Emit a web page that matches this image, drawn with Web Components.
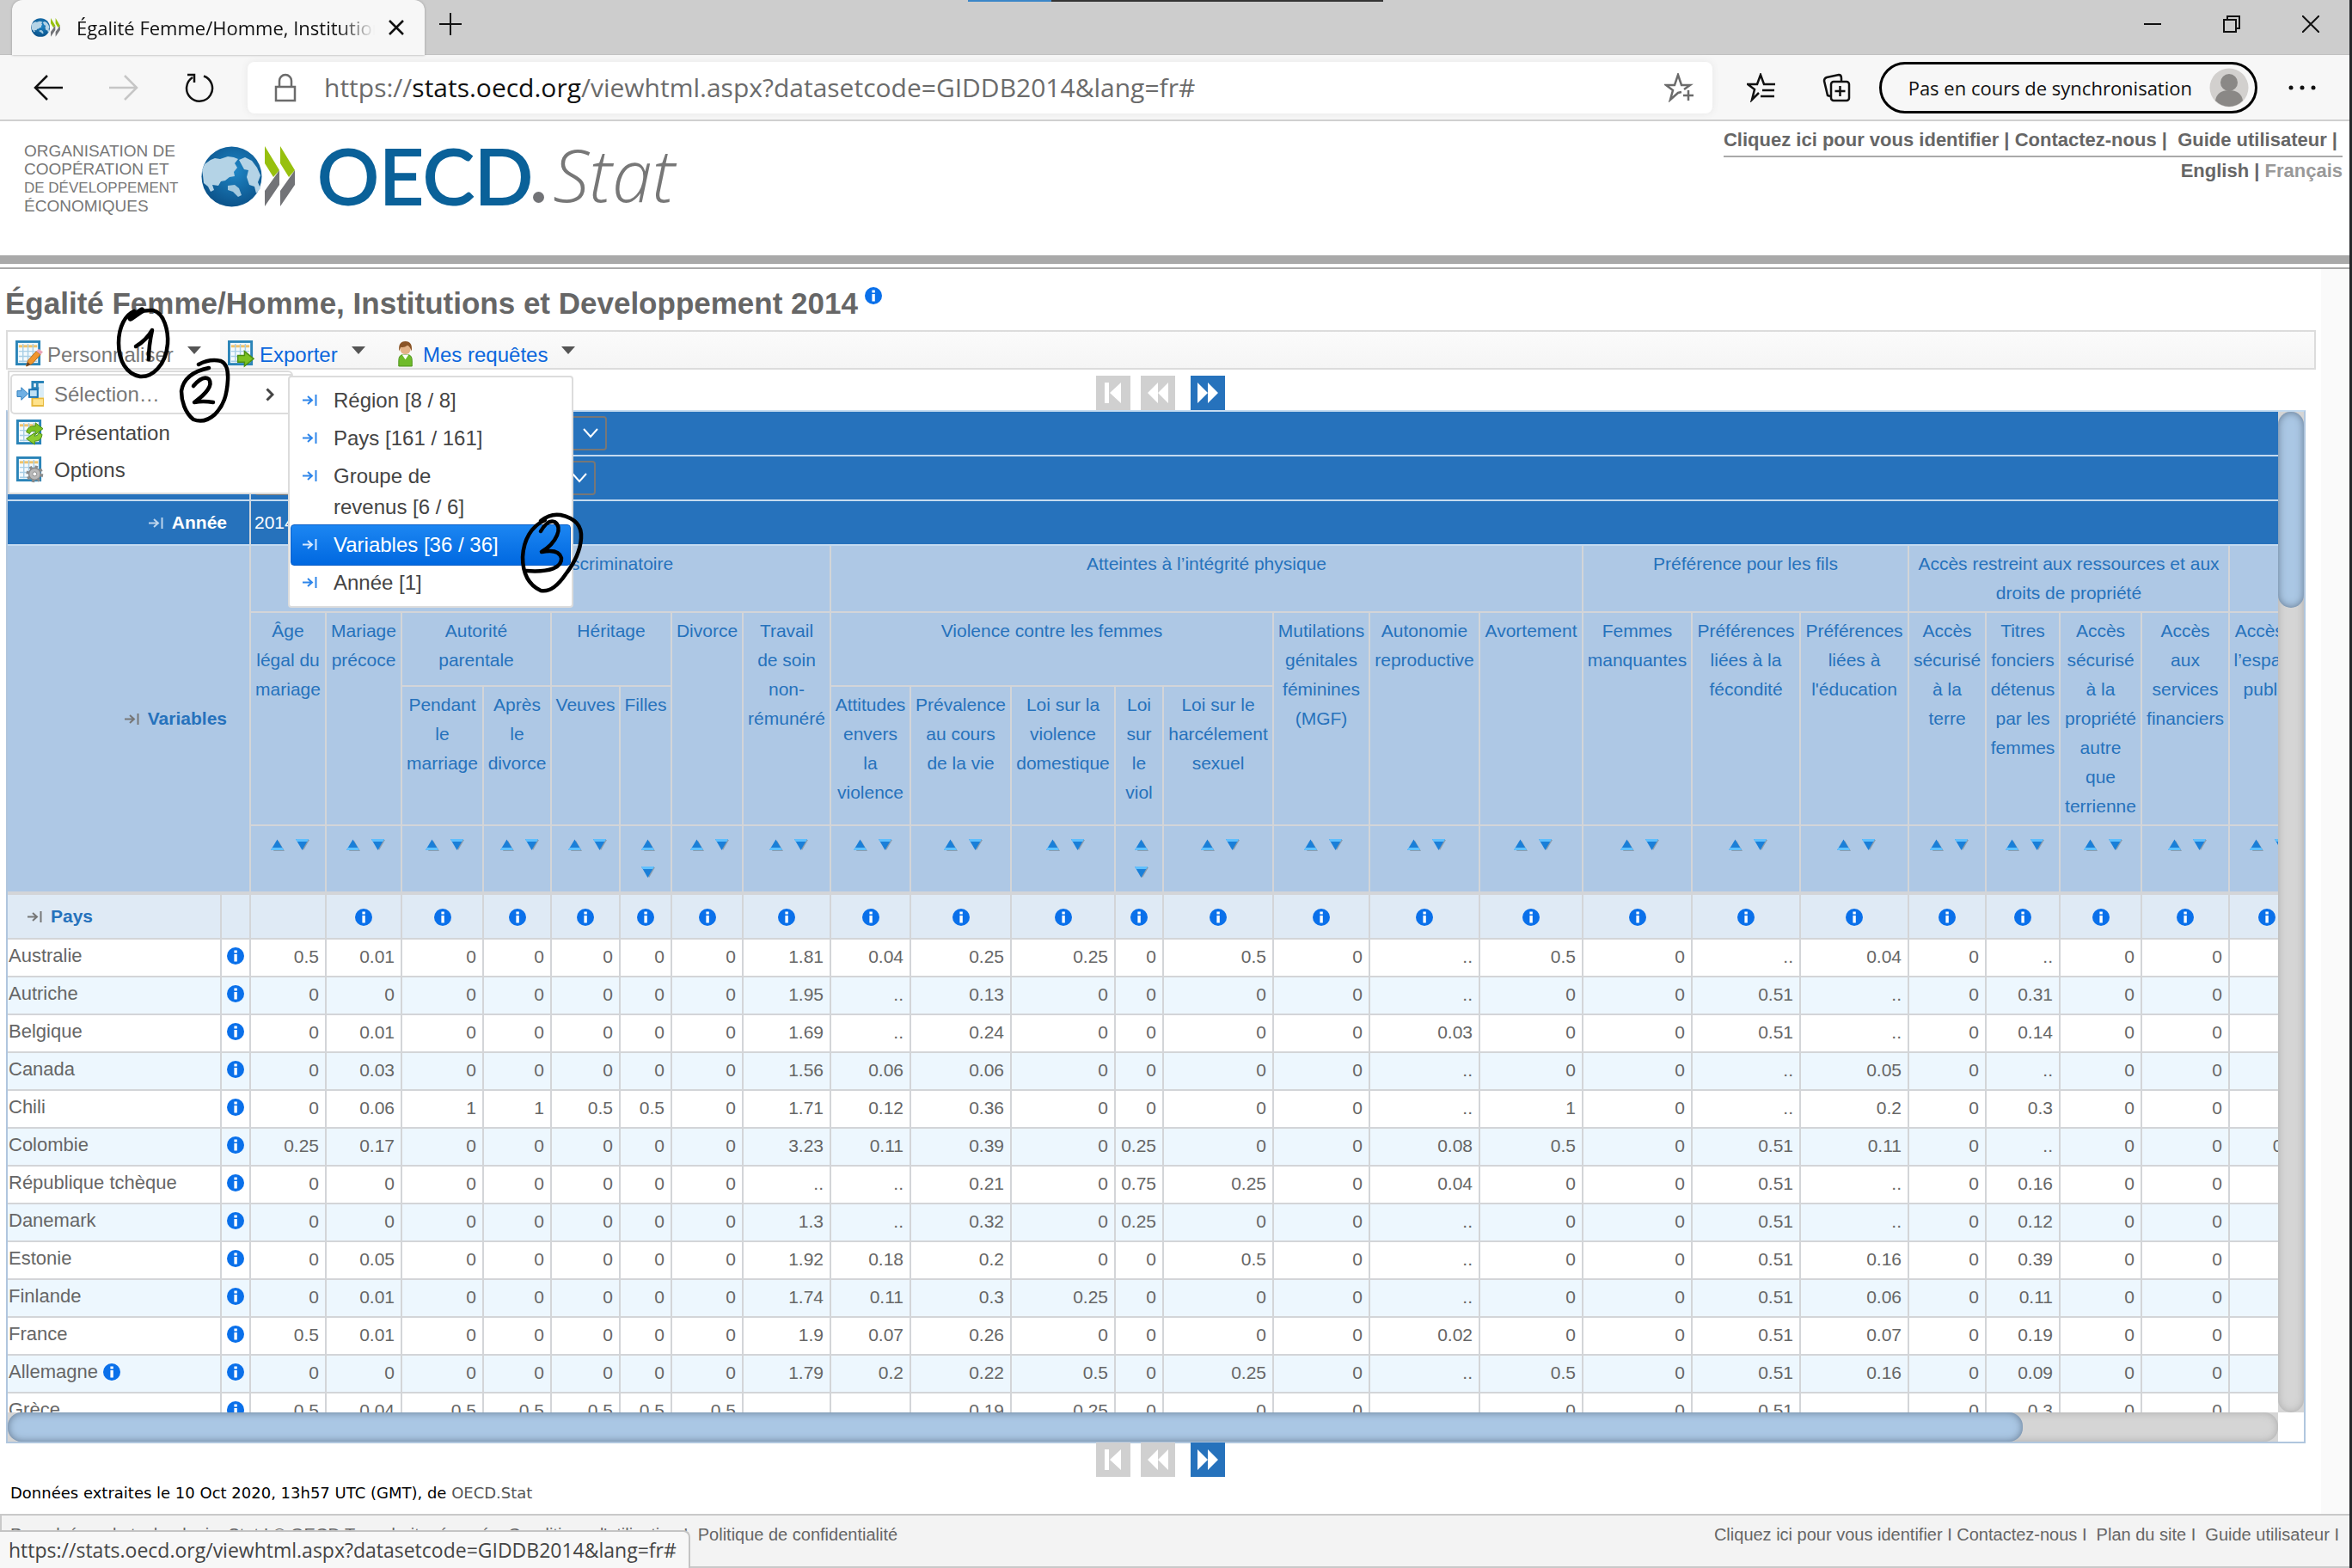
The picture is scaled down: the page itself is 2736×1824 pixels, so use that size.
<!DOCTYPE html>
<html lang="fr">
<head>
<meta charset="utf-8">
<title>Égalité Femme/Homme, Institutions et Developpement 2014</title>
<style>
html,body{margin:0;height:100%}
body{background:#fff;font-family:"Liberation Sans",Arial,sans-serif;color:#666;overflow:hidden}
</style>
</head>
<body>
<oecd-app></oecd-app>
<script>
const define=(name,css,html,setup)=>customElements.define(name,class extends HTMLElement{
  constructor(){super();this.attachShadow({mode:'open'});}
  connectedCallback(){
    this.shadowRoot.innerHTML='<style>*{box-sizing:border-box}a{color:inherit;text-decoration:none}button{font:inherit;color:inherit;background:none;border:0;padding:0;margin:0}'+css+'</style>'+(typeof html==='function'?html(this):html);
    if(setup)setup(this,this.shadowRoot);
  }
});

/* ---------- small icons ---------- */
define('info-dot',':host{display:inline-flex}svg{display:block}',
 '<svg width="20" height="20" viewBox="0 0 20 20"><circle cx="10" cy="10" r="10" fill="#0a70ea"/><path d="M8.400 3.400h3.400v3H8.400zM8.400 8h3.400v8.400H8.400z" fill="#fff"/></svg>');

define('pivot-arrow',':host{display:inline-flex;color:#777}svg{display:block}',
 '<svg width="17" height="13" viewBox="0 0 17 13" fill="none" stroke="currentColor" stroke-width="2"><path d="M0 6.500h10M6 2l5 4.500-5 4.500M15.500 0v13"/></svg>');

define('sort-arrows',`:host{display:flex;flex-wrap:wrap;justify-content:center;gap:16px 12px}button{display:block}svg{display:block}`,
 `<button aria-label="Tri croissant"><svg width="17" height="16" viewBox="0 0 17 16"><path d="M10 3l7 12H4z" fill="#7f8a96" opacity=".7"/><path d="M8.500 1.500L16 14H1z" fill="#1a7fd8"/><path d="M2.500 11h12L16 14H1z" fill="#5fc0ff"/></svg></button>
  <button aria-label="Tri décroissant"><svg width="17" height="16" viewBox="0 0 17 16"><path d="M3 2h14l-7 12z" fill="#7f8a96" opacity=".7"/><path d="M1 1h15L8.500 14z" fill="#1a7fd8"/><path d="M1 1h15l-1.500 3h-12z" fill="#5fc0ff"/></svg></button>`);

const sheet='<rect x="1.500" y="1.500" width="27" height="27" fill="#f4fafd" stroke="#2a84b8" stroke-width="3"/><path d="M4 7h22" stroke="#f0c36a" stroke-width="3"/><path d="M4 13h22M4 19h22M4 25h22M9 4v22M15 4v22M21 4v22" stroke="#a9cfe6" stroke-width="1.500"/>';
const glyphs={
 edit:sheet+'<path d="M13 31l2-7L25 13l5 4-10 11z" fill="#f0962e" stroke="#b86a18"/><path d="M25 13l3-3 5 4-3 3z" fill="#e9a3b6"/><path d="M13 31l1.500-5 3.500 3z" fill="#5a4030"/>',
 export:sheet+'<path d="M12 18h8v-5l11 9-11 9v-5h-8z" fill="#7cc122" stroke="#4b8f10" stroke-width="1.500"/>',
 user:'<path d="M5 31v-7q0-7 6-7h4q6 0 6 7v7z" fill="#6fbb2a" stroke="#4c921a"/><path d="M9 17h8l-4 6z" fill="#fff"/><circle cx="13" cy="10" r="6.500" fill="#e2b287"/><path d="M5.500 13Q4 1 13 1t7.500 12q-2-6-5-7-4 3-8 2-1 2-2 5z" fill="#8a5426"/>',
 select:'<path d="M18 1.500h15M19.500 1.500v11M25 3v26M19 9h14" stroke="#2a84b8" stroke-width="3" fill="none"/><path d="M27 4h6v16h-6z" fill="#d9ecf6"/><path d="M19 21h14v9H19z" fill="#ffe38c" stroke="#e6b93e" stroke-width="2"/><rect x="15.500" y="10.500" width="10" height="9" fill="#bfe0f4" stroke="#1c74b4" stroke-width="2"/><path d="M1 12h5V8l8 7.500L6 23v-4H1z" fill="#6fb0e4" stroke="#2f7fbe"/>',
 swap:sheet+'<path d="M12 15q2-8 11-7V4l9 7-9 7v-4q-6-1-7 3z" fill="#7cc122" stroke="#4b8f10"/><path d="M31 18q-1 8-9 8v4l-10-7 10-7v4q4 0 5-4z" fill="#8ccc30" stroke="#4b8f10"/>',
 gear:sheet+'<circle cx="22" cy="21" r="7" fill="#b9b9b9" stroke="#8b8b8b" stroke-width="1.500"/><circle cx="22" cy="21" r="8.500" fill="none" stroke="#8b8b8b" stroke-width="3.500" stroke-dasharray="3.300 3.380"/><circle cx="22" cy="21" r="2.500" fill="#fff" stroke="#8b8b8b"/>'
};
define('menu-glyph',':host{display:inline-flex}svg{display:block}',h=>{const n=h.getAttribute('name'),w=n==='user'?28:32;return `<svg width="${w}" height="32" viewBox="0 0 ${w+1} 33">${glyphs[n]}</svg>`});

define('oecd-mark',':host{display:inline-flex}svg{display:block;width:100%;height:100%}',
 `<svg viewBox="0 0 109 71"><defs><radialGradient id="g" cx=".55" cy=".4" r=".65"><stop offset="0" stop-color="#1f86c6"/><stop offset="1" stop-color="#0a4f86"/></radialGradient></defs>
 <circle cx="35.500" cy="35.500" r="35" fill="url(#g)"/>
 <path d="M4 21l7-5 5-2 6 1 9-3 7 1 5 2-4 5 3 5-4 5 1 5-6 1-5 4-5 1-3 5-7-1 2 6-4 2-3-6-5-4-1-9-1-6z" fill="#b4d3e6"/>
 <path d="M44 16l7-3 8 4 6 8 4 9-3 8 3 7-5 6-2-8-6-2-3-9 2-8-5-1z" fill="#b4d3e6"/>
 <path d="M31 46l8-1 5 4 3 8-4 2-6-6-6-2z" fill="#a3c9df"/>
 <path d="M74 0l17 28-7 8-10-16zM92 0l17 28-7 8-10-16z" fill="#97c00e"/><path d="M91 28v17L74 70V52zM109 28v17L92 70V52z" fill="#727377"/></svg>`);

/* ---------- browser window ---------- */
define('tab-strip',`
:host{display:block;height:64px;background:#cdcdcd;border-bottom:1px solid #c0c0c0;font-family:"Open Sans","Segoe UI",sans-serif;color:#111}
.row{display:flex;height:64px;padding-left:14px;align-items:stretch;position:relative}
.load{position:absolute;left:1126px;top:0;width:483px;height:2px;background:linear-gradient(90deg,#3a86c8 97px,#333 97px)}
.tab{width:480px;background:#f7f7f7;border-radius:12px 12px 0 0;display:flex;align-items:center;padding:0 24px 0 22px;box-shadow:0 0 3px #999}
oecd-mark{width:34px;height:22px;margin-right:19px}
.t{flex:1;overflow:hidden;white-space:nowrap;font-size:22px;line-height:34px;-webkit-mask-image:linear-gradient(90deg,#000 88%,transparent)}
.tab button{margin-left:16px}
.plus{width:60px;display:grid;place-items:center;padding-bottom:8px}
.win{margin-left:auto;display:flex;gap:72px;align-items:center;padding:0 35px 8px 0}
svg{display:block;fill:none;stroke:#111;stroke-width:2}`,
`<div class="row"><div class="load"></div>
<div class="tab"><oecd-mark></oecd-mark><span class="t">Égalité Femme/Homme, Institutions</span><button aria-label="Fermer l’onglet"><svg width="18" height="18"><path d="M1 1l16 16M17 1L1 17" stroke-width="2.500"/></svg></button></div>
<button class="plus" aria-label="Nouvel onglet"><svg width="28" height="28"><path d="M14 1v26M1 14h26"/></svg></button>
<div class="win"><button aria-label="Réduire"><svg width="20" height="20"><path d="M0 10h20"/></svg></button><button aria-label="Restaurer"><svg width="20" height="20"><path d="M1 5h14v14H1zM5 5V1h14v14h-4"/></svg></button><button aria-label="Fermer"><svg width="20" height="20"><path d="M0 0l20 20M20 0L0 20"/></svg></button></div></div>`);

define('address-bar',`
:host{display:flex;align-items:center;height:77px;background:#f7f7f7;border-bottom:2px solid #d0d0d0;padding:0 39px 0 39px;font-family:"Open Sans","Segoe UI",sans-serif;color:#111}
svg{display:block;fill:none;stroke:currentColor;stroke-width:2.500}
.nav{display:flex;gap:54px;align-items:center;width:249px}
.box{flex:1;height:60px;border-radius:8px;background:#fff;box-shadow:0 0 8px #e6e6e6;display:flex;align-items:center;padding:0 22px 0 31px;color:#6b6b6b}
.url{flex:1;margin-left:32px;font-size:30px;white-space:nowrap}.url b{font-weight:400;color:#111}
.tools{display:flex;align-items:center;gap:54px;padding:0 32px 0 40px}
.prof{height:60px;border:3px solid #000;border-radius:30px;display:flex;align-items:center;gap:20px;padding:0 7px 0 31px;font-size:22px;margin-right:36px;white-space:nowrap}`,
`<div class="nav"><button aria-label="Retour"><svg width="34" height="32"><path d="M16 2L2 16l14 14M2 16h32"/></svg></button><button aria-label="Suivant" style="color:#c6c6c6"><svg width="34" height="32"><path d="M18 2l14 14-14 14M32 16H0"/></svg></button><button aria-label="Actualiser"><svg width="34" height="34"><path d="M22 3.500A15 15 0 1 1 9 5M3 2h8v9"/></svg></button></div>
<div class="box"><svg width="26" height="34"><path d="M2 16h22v16H2zM6 16V9a7 7 0 0 1 14 0v7"/></svg><span class="url">https://<b>stats.oecd.org</b>/viewhtml.aspx?datasetcode=GIDDB2014&amp;lang=fr#</span>
<button aria-label="Ajouter aux favoris"><svg width="34" height="34" stroke-width="2"><path d="M20 22l-4 1-9 8 3-11-8-6h10L16 2l4 12h10l-7 5M28 20v12M22 26h12"/></svg></button></div>
<div class="tools"><button aria-label="Favoris"><svg width="34" height="34"><path d="M14 23l-8 8 3-12-8-6h11l4-11 4 11h13M18 20h14M16 27h16"/></svg></button><button aria-label="Collections"><svg width="34" height="34"><rect x="10" y="10" width="21" height="22" rx="3"/><path d="M20.500 15v12M14.500 21h12M9 27l-3-1L2 9q0-3 3-4l14-3q3 0 3 4v3"/></svg></button></div>
<button class="prof"><span>Pas en cours de synchronisation</span><svg width="46" height="46" style="stroke:none"><circle cx="23" cy="23" r="22.500" fill="#d2d0ce"/><circle cx="23" cy="17" r="10" fill="#8a8886"/><path d="M7 38q2-12 16-12t16 12q-7 7-16 7t-16-7z" fill="#8a8886"/></svg></button>
<button aria-label="Plus d’options"><svg width="32" height="6" style="fill:#111;stroke:none"><circle cx="3" cy="3" r="2.500"/><circle cx="16" cy="3" r="2.500"/><circle cx="29" cy="3" r="2.500"/></svg></button>`);

/* ---------- site header ---------- */
define('site-header',`
:host{display:flex;justify-content:space-between;height:156px;padding:8px 8px 0 28px}
.brand{display:flex;align-items:flex-start;padding-top:16px}
.org{width:206px;font-size:19px;line-height:21px;color:#777;white-space:nowrap}.org small{font-size:17px}
oecd-mark{width:109px;height:71px;margin-top:5px}
.word{font-family:Lato,sans-serif;font-size:90px;line-height:76px;color:#0a6199;-webkit-text-stroke:2px #0a6199;margin-left:26px}
.stat{font-family:"Open Sans",sans-serif;font-weight:300;font-style:italic;font-size:84px;line-height:76px;color:#777;margin-left:10px}
.dot{flex:none;width:13px;height:13px;border-radius:50%;background:#727377;margin:58px 0 0}
.links{font-weight:bold;font-size:22px;line-height:24px;text-align:right}
.top{border-bottom:2px solid #aaa;padding:2px 6px 6px 0;white-space:pre}
.lang{padding-top:4px}.lang i{font-style:normal;color:#999}`,
`<div class="brand"><div class="org">ORGANISATION DE<br>COOPÉRATION ET<br><small>DE DÉVELOPPEMENT</small><br>ÉCONOMIQUES</div><oecd-mark></oecd-mark><span class="word">OECD</span><span class="dot"></span><span class="stat">Stat</span></div>
<nav class="links"><div class="top"><a href="#">Cliquez ici pour vous identifier</a> | <a href="#">Contactez-nous</a> |  <a href="#">Guide utilisateur</a> |</div><div class="lang"><a href="#">English</a> | <i>Français</i></div></nav>`);

/* ---------- toolbar and menus ---------- */
define('tool-item',`
:host{display:flex;align-items:flex-start;color:#0a66dd;font-size:24px}
button{display:flex;align-items:flex-start;padding-top:10px;line-height:34px}menu-glyph{margin-right:5px}
.caret{margin:7px 0 0 16px;border:8px solid transparent;border-top:9px solid #555;border-bottom:0}`,
h=>`<button><menu-glyph name="${h.getAttribute('icon')}"></menu-glyph><slot></slot><span class="caret"></span></button>`);

define('data-toolbar',`
:host{display:flex;height:46px;border:2px solid #dcdcdc;background:linear-gradient(#fbfbfb,#f5f5f5);margin:0 39px 0 7px;position:relative}
tool-item{padding:0 0 0 9px}
.on{background:#fff;color:#777;width:247px}.ex{width:194px}
.main{position:absolute;left:0;top:45px;width:332px;height:144px;background:#fff;border:2px solid #dcdcdc;border-radius:0 6px 0 0;z-index:2;padding:2px 0;font-size:24px;color:#444;display:flex;flex-direction:column}
.main button{display:flex;align-items:center;gap:12px;height:44px;padding:0 8px 4px 8px;text-align:left}
.main .sel{height:48px;border:2px solid #dcdcdc;border-radius:5px 0 0 5px;color:#777;padding:0 18px 0 5px;margin:0 0 2px 1px}
.sel svg{margin-left:auto}
.sub{position:absolute;left:326px;top:51px;width:332px;height:270px;background:#fff;border:2px solid #dcdcdc;border-radius:4px;z-index:3;font-size:24px;line-height:36px;color:#444;padding:5px 1px;display:flex;flex-direction:column}
.sub button{display:flex;align-items:flex-start;gap:19px;padding:4px 84px 4px 14px;text-align:left;line-height:36px}
.sub pivot-arrow{color:#2f86ea;margin-top:11px}
.sub .hot{background:linear-gradient(#1c86f2,#0068e0);color:#fff;border-radius:4px;height:48px;padding:5px 20px 5px 13px;margin:-2px 0;border:1px solid #0a5fc8}.hot pivot-arrow{color:#d5e8ff}`,
`<tool-item class="on" icon="edit">Personnaliser</tool-item><tool-item class="ex" icon="export">Exporter</tool-item><tool-item icon="user">Mes requêtes</tool-item>
<div class="main"><button class="sel"><menu-glyph name="select"></menu-glyph>Sélection…<svg width="10" height="16" fill="none" stroke="#444" stroke-width="3"><path d="M1.500 1.500L8 8l-6.500 6.500"/></svg></button><button><menu-glyph name="swap"></menu-glyph>Présentation</button><button><menu-glyph name="gear"></menu-glyph>Options</button></div>
<div class="sub"><button><pivot-arrow></pivot-arrow>Région [8 / 8]</button><button><pivot-arrow></pivot-arrow>Pays [161 / 161]</button><button><pivot-arrow></pivot-arrow>Groupe de revenus [6 / 6]</button><button class="hot"><pivot-arrow></pivot-arrow>Variables [36 / 36]</button><button><pivot-arrow></pivot-arrow>Année [1]</button></div>`);

define('page-nav',`
:host{display:flex;justify-content:center;align-items:flex-end;gap:12px;height:47px;padding-right:34px}
button{width:40px;height:40px;background:#d0d0d0;display:grid;place-items:center}.n{background:#2672bc;margin-left:6px}svg{fill:#fff;display:block}`,
`<button aria-label="Première page"><svg width="24" height="26"><path d="M2 1h5v24H2zM21 1v24L8 13z"/></svg></button><button aria-label="Page précédente"><svg width="26" height="26"><path d="M13 1v24L1 13zM25 1v24L13 13z"/></svg></button><button class="n" aria-label="Page suivante"><svg width="26" height="26"><path d="M1 1l12 12L1 25zM13 1l12 12-12 12z"/></svg></button>`);

/* ---------- data table ---------- */
const widths=[249,34,88,88,95,79,80,60,83,102,93,117,121,56,128,112,128,120,127,126,126,90,86,95,102,88];
const rows=`Australie|0.5 0.01 0 0 0 0 0 1.81 0.04 0.25 0.25 0 0.5 0 .. 0.5 0 .. 0.04 0 .. 0 0
Autriche|0 0 0 0 0 0 0 1.95 .. 0.13 0 0 0 0 .. 0 0 0.51 .. 0 0.31 0 0
Belgique|0 0.01 0 0 0 0 0 1.69 .. 0.24 0 0 0 0 0.03 0 0 0.51 .. 0 0.14 0 0
Canada|0 0.03 0 0 0 0 0 1.56 0.06 0.06 0 0 0 0 .. 0 0 .. 0.05 0 .. 0 0
Chili|0 0.06 1 1 0.5 0.5 0 1.71 0.12 0.36 0 0 0 0 .. 1 0 .. 0.2 0 0.3 0 0
Colombie|0.25 0.17 0 0 0 0 0 3.23 0.11 0.39 0 0.25 0 0 0.08 0.5 0 0.51 0.11 0 .. 0 0 0.5
République tchèque|0 0 0 0 0 0 0 .. .. 0.21 0 0.75 0.25 0 0.04 0 0 0.51 .. 0 0.16 0 0
Danemark|0 0 0 0 0 0 0 1.3 .. 0.32 0 0.25 0 0 .. 0 0 0.51 .. 0 0.12 0 0
Estonie|0 0.05 0 0 0 0 0 1.92 0.18 0.2 0 0 0.5 0 .. 0 0 0.51 0.16 0 0.39 0 0
Finlande|0 0.01 0 0 0 0 0 1.74 0.11 0.3 0.25 0 0 0 .. 0 0 0.51 0.06 0 0.11 0 0
France|0.5 0.01 0 0 0 0 0 1.9 0.07 0.26 0 0 0 0 0.02 0 0 0.51 0.07 0 0.19 0 0
Allemagne|0 0 0 0 0 0 0 1.79 0.2 0.22 0.5 0 0.25 0 .. 0.5 0 0.51 0.16 0 0.09 0 0
Grèce|0.5 0.04 0.5 0.5 0.5 0.5 0.5 .. .. 0.19 0.25 0 0 0 .. 0 0 0.51 .. 0 0.3 0 0`.split('\n').map(l=>{const[n,v]=l.split('|');return[n,v.split(' ')]});
const th=(t,c=1,r=1)=>`<th${c>1?` colspan="${c}"`:''}${r>1?` rowspan="${r}"`:''}>${t}</th>`;
define('stat-table',`
:host{display:block;overflow:hidden}
table{table-layout:fixed;width:2643px;border-collapse:separate;border-spacing:0;font-size:21px;line-height:34px}
td,th{padding:0;border-right:2px solid #d3d5d8;border-bottom:2px solid #d3d5d8;font-weight:400;overflow:hidden}
thead th{background:#aec8e5;color:#2672bc;vertical-align:top;padding:4px 4px 0;text-align:center}
.f{height:52px}.f th{background:#2672bc;color:#fff;border-bottom-color:#c5dbf0;vertical-align:middle;text-align:left;padding:0 4px}
.f .l,thead .v{text-align:right;padding:0 26px 0 0;font-weight:bold;vertical-align:middle}
.f pivot-arrow{color:#bcd4ec}pivot-arrow{margin-right:10px}.v{border-bottom-width:4px!important}
select{appearance:none;display:block;height:40px;border:2px solid #777;border-radius:4px;background:none;width:410px}
.pick{position:relative;width:410px}.pick svg{position:absolute;right:10px;top:14px}.s2,.s2 select{width:397px}
.s th{height:80px;border-bottom-width:4px;padding:14px 6px 0 10px}
.p{height:52px}.p th{background:#dfeaf5;text-align:center;vertical-align:middle;padding:0}.p info-dot{vertical-align:middle}
.p .c{text-align:left;padding-left:23px;font-weight:bold}
tbody tr{height:44px}tbody tr:nth-child(even){background:#edf7fe}
td{text-align:right;padding:0 7px 2px 0}tbody th{text-align:left;font-size:22px;padding:0 0 5px 1px;line-height:36px}
td.i{text-align:center;padding:0 0 4px}td.i info-dot,tbody th info-dot{vertical-align:middle;margin:0 0 2px}`,
()=>`<table><colgroup>${widths.map(w=>`<col style="width:${w}px">`).join('')}</colgroup><thead>
<tr class="f"><th class="l" colspan="2"></th><th colspan="24"><div class="pick"><select aria-label="Région"></select><svg width="18" height="12" fill="none" stroke="#fff" stroke-width="2"><path d="M1 1l8 9 8-9"/></svg></div></th></tr>
<tr class="f"><th class="l" colspan="2"></th><th colspan="24"><div class="pick s2"><select aria-label="Groupe de revenus"></select><svg width="18" height="12" fill="none" stroke="#fff" stroke-width="2"><path d="M1 1l8 9 8-9"/></svg></div></th></tr>
<tr class="f"><th class="l" colspan="2"><pivot-arrow></pivot-arrow>Année</th><th colspan="24">2014</th></tr>
<tr style="height:78px"><th class="v" colspan="2" rowspan="4"><pivot-arrow></pivot-arrow>Variables</th>${th('Code de la famille discriminatoire',8)}${th('Atteintes à l’intégrité physique',8)}${th('Préférence pour les fils',3)}${th('Accès restreint aux ressources et aux droits de propriété',4)}${th('')}</tr>
<tr style="height:86px">${th('Âge légal du mariage',1,2)}${th('Mariage précoce',1,2)}${th('Autorité<br>parentale',2)}${th('Héritage',2)}${th('Divorce',1,2)}${th('Travail<br>de soin<br>non-<br>rémunéré',1,2)}${th('Violence contre les femmes',5)}${['Mutilations génitales féminines (MGF)','Autonomie reproductive','Avortement','Femmes manquantes','Préférences liées à la fécondité','Préférences liées à l\'éducation','Accès sécurisé à la terre','Titres fonciers détenus par les femmes','Accès sécurisé à la propriété autre que terrienne','Accès aux services financiers','Accès à l’espace public'].map(t=>th(t,1,2)).join('')}</tr>
<tr style="height:162px">${['Pendant<br>le<br>marriage','Après<br>le<br>divorce','Veuves','Filles','Attitudes envers<br>la<br>violence','Prévalence au cours de la vie','Loi sur la violence domestique','Loi<br>sur<br>le<br>viol','Loi sur le harcélement sexuel'].map(t=>th(t)).join('')}</tr>
<tr class="s">${widths.slice(2).map(()=>th('<sort-arrows></sort-arrows>')).join('')}</tr>
<tr class="p"><th class="c"><pivot-arrow></pivot-arrow>Pays</th><th></th><th></th>${widths.slice(3).map(()=>th('<info-dot></info-dot>')).join('')}</tr></thead>
<tbody>${rows.map(([n,v])=>`<tr><th>${n}${n==='Allemagne'?' <info-dot></info-dot>':''}</th><td class="i"><info-dot></info-dot></td>${widths.slice(2).map((_,i)=>`<td>${v[i]||''}</td>`).join('')}</tr>`).join('')}</tbody></table>`);

define('slide-bar',`
:host{display:block;background:#d5d5d5}
.t{width:100%;height:100%;border-radius:16px;background:#d5d5d5;box-shadow:inset 0 0 10px #aaa}
.b{border-radius:16px;background:#aac7e4;box-shadow:inset 0 0 10px #64788f;width:var(--w,100%);height:var(--h,100%)}`,
`<div class="t"><div class="b"></div></div>`);

define('table-frame',`
:host{display:grid;grid-template-columns:minmax(0,1fr) 30px;grid-template-rows:minmax(0,1fr) 34px;flex:1;min-height:0;margin:0 51px 0 7px;border:2px solid #b0c6de;border-top-color:#c5dbf0}
stat-table{min-height:0}.y{--h:228px}.x{--w:2344px}`,
`<stat-table></stat-table><slide-bar class="y"></slide-bar><slide-bar class="x"></slide-bar>`);

define('site-footer',`
:host{display:flex;justify-content:space-between;height:63px;background:#f3f3f3;border:2px solid #c9c9c9;border-right:0;font-size:20px;line-height:24px;padding:10px 12px 0 10px;white-space:pre}`,
`<div>Propulsé par la technologie .Stat I © OECD Tous droits réservés  <a href="#">Conditions d'utilisation</a> I  <a href="#">Politique de confidentialité</a></div><div><a href="#">Cliquez ici pour vous identifier</a> I <a href="#">Contactez-nous</a> I  <a href="#">Plan du site</a> I  <a href="#">Guide utilisateur</a> I</div>`);

define('ink-notes',':host{position:absolute;left:0;top:0;z-index:5;pointer-events:none}svg{display:block;fill:none;stroke:#000;stroke-width:4.500;stroke-linecap:round;stroke-linejoin:round}',
`<svg width="700" height="720"><path d="M151 371Q160 360 178 361C191 364 196 385 195 400 193 425 177 439 163 438 147 435 138 420 138 399 138 380 146 366 156 362"/><path d="M152 370L165 361" stroke-width="7"/><path d="M158 403Q170 396 177 384Q173 402 173 418"/>
<path d="M231 424Q244 417 257 420Q266 424 265 442C264 460 260 472 250 482Q238 493 225 488C215 480 211 466 211 455Q214 434 243 428"/><path d="M225 449Q236 436 243 441C248 448 240 458 226 468Q236 466 248 468"/>
<path d="M629 606Q640 597 652 599C670 603 677 612 676 626 675 642 668 655 658 668Q643 690 629 687C614 680 608 665 608 648 609 628 618 612 634 605"/><path d="M629 618Q637 604 645 607C655 613 648 631 630 642Q650 638 653 649C654 660 640 666 612 664"/></svg>`);

define('oecd-app',`
:host{display:flex;flex-direction:column;height:100vh;min-height:1400px;position:relative;overflow:hidden;background:#fff;border-right:3px solid #26282b}
.rule{height:16px;border-top:10px solid #a9a9a9;border-bottom:2px solid #a9a9a9;flex:none}
.page{flex:1;min-height:0;display:flex;flex-direction:column;background:linear-gradient(270deg,#fafafa 33px,#fff 33px)}
h1{margin:0;padding:22px 0 0 6px;height:71px;font-size:35px;line-height:36px;display:flex;align-items:flex-start;gap:8px;color:#666}h1 info-dot{margin-top:-1px}
data-toolbar,page-nav,site-header,site-footer,tab-strip,address-bar,h1,.cap{flex:none}
.cap{font-family:"DejaVu Sans",Verdana,sans-serif;font-size:18px;line-height:24px;color:#000;padding:7px 0 12px 12px}.cap a{color:#555}
page-nav.b{height:39px}
.st{position:absolute;left:0;bottom:0;height:44px;background:#f7f7f7;border:solid #c4c4c4;border-width:2px 2px 0 0;border-radius:0 8px 0 0;font-family:"Open Sans","Segoe UI",sans-serif;font-size:23px;line-height:42px;padding:0 14px 0 10px;color:#444;z-index:6}`,
`<tab-strip></tab-strip><address-bar></address-bar><site-header></site-header><div class="rule"></div>
<div class="page"><h1>Égalité Femme/Homme, Institutions et Developpement 2014<info-dot></info-dot></h1>
<data-toolbar></data-toolbar><page-nav></page-nav><table-frame></table-frame><page-nav class="b"></page-nav>
<div class="cap">Données extraites le 10 Oct 2020, 13h57 UTC (GMT), de <a href="#">OECD.Stat</a></div></div>
<site-footer></site-footer><div class="st">https://stats.oecd.org/viewhtml.aspx?datasetcode=GIDDB2014&amp;lang=fr#</div><ink-notes></ink-notes>`);
</script>
</body>
</html>
